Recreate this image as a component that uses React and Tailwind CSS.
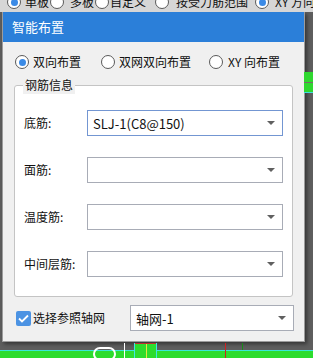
import React from 'react';

const font = { fontFamily: '"Noto Sans CJK SC", "Noto Sans", sans-serif' };

const Radio = ({ checked }) => (
  <span className="w-[14px] h-[14px] rounded-full border border-[#5a5a5a] bg-white flex items-center justify-center shrink-0">
    {checked && <span className="w-[7px] h-[7px] rounded-full bg-[#3a8ae6]" />}
  </span>
);

const Caret = () => (
  <svg width="8" height="4" viewBox="0 0 8 4" className="shrink-0">
    <path d="M0 0h8L4 4z" fill="#606060" />
  </svg>
);

const Select = ({ value, focused, className = '' }) => (
  <div
    className={`h-[26px] bg-white border flex items-center pl-[5px] pr-[7px] ${
      focused ? 'border-[#7396d2]' : 'border-[#a8acb6]'
    } ${className}`}
  >
    <span className="flex-1 text-[13px] text-[#111] leading-none">{value}</span>
    <Caret />
  </div>
);

const Row = ({ label, value, focused }) => (
  <div className="flex items-center h-[26px]">
    <span className="w-[63px] text-[12px] text-[#111]">{label}</span>
    <Select value={value} focused={focused} className="w-[196px]" />
  </div>
);

export default function App() {
  return (
    <div className="w-[313px] h-[358px] bg-[#5e5e5e] relative overflow-hidden" style={font}>
      {/* toolbar strip behind the dialog */}
      <div className="h-[12px] bg-[#d6d6d6] overflow-hidden relative">
        <div className="flex items-center -mt-[8px] h-[20px] text-[12px] text-[#111] whitespace-nowrap">
          <span className="w-[3px] h-full bg-white" />
          <span className="ml-[7px]"><Radio checked /></span>
          <span className="ml-[4px]">单板</span>
          <span className="ml-[1px]"><Radio /></span>
          <span className="ml-[6px]">多板</span>
          <span className="ml-[1px]"><Radio /></span>
          <span className="ml-[1px]">自定义</span>
          <span className="ml-[9px]"><Radio /></span>
          <span className="ml-[7px]">按受力筋范围</span>
          <span className="ml-[2px] w-px h-full bg-[#9a9a9a]" />
          <span className="ml-[5px]"><Radio checked /></span>
          <span className="ml-[6px]">XY 方向</span>
        </div>
      </div>

      {/* canvas scraps on the right */}
      <div className="absolute left-[304px] top-[72px] w-[9px] h-[21px] bg-[#2fd82f] border-b border-[#3ee0e0]">
        <div className="mt-[10px] h-px bg-[#7a6a6a]" />
      </div>

      <div className="flex">
        {/* dialog */}
        <div className="ml-[2px] w-[303px] h-[330px] bg-[#f0f0f0] border border-[#9c9c9c] border-t-0 shadow-[2px_2px_4px_rgba(0,0,0,0.45)] flex flex-col">
          <div className="h-[30px] bg-[#2b7fd9] flex items-center pl-[9px] text-white text-[13px]">
            智能布置
          </div>

          <div className="flex items-center h-[20px] mt-[10px] pl-[12px] text-[12px] text-[#111]">
            <Radio checked />
            <span className="ml-[4px]">双向布置</span>
            <span className="ml-[20px]"><Radio /></span>
            <span className="ml-[4px]">双网双向布置</span>
            <span className="ml-[18px]"><Radio /></span>
            <span className="ml-[5px]">XY 向布置</span>
          </div>

          <div className="relative mt-[13px] ml-[11px] w-[279px] h-[212px] bg-white border border-[#c4c4c4] rounded-[3px] pt-[24px] pl-[9px] flex flex-col gap-[21px]">
            <span className="absolute left-[8px] -top-[10px] px-[2px] bg-[#f0f0f0] text-[12px] leading-[18px] text-[#111]">
              钢筋信息
            </span>
            <Row label="底筋:" value="SLJ-1(C8@150)" focused />
            <Row label="面筋:" value="" />
            <Row label="温度筋:" value="" />
            <Row label="中间层筋:" value="" />
          </div>

          <div className="flex items-center mt-[8px] pl-[13px]">
            <span className="w-[15px] h-[15px] rounded-[2px] bg-[#4c93e3] flex items-center justify-center">
              <svg width="11" height="9" viewBox="0 0 11 9">
                <path d="M1 4.5l3 3L10 1.5" stroke="white" strokeWidth="1.8" fill="none" />
              </svg>
            </span>
            <span className="ml-[2px] text-[12px] text-[#111]">选择参照轴网</span>
            <Select value="轴网-1" className="ml-[25px] w-[164px]" />
          </div>
        </div>
      </div>

      {/* canvas below */}
      <div className="absolute left-0 right-0 top-[350px] h-[8px] bg-[#2ddc2d] border-t border-[#3ae6d8]" />
      <div className="absolute left-[93px] top-[347px] w-[23px] h-[14px] rounded-full border-2 border-white" />
      <div className="absolute left-[124px] top-[343px] w-px h-[15px] bg-white" />
      <div className="absolute left-[134px] top-[343px] w-[23px] h-[15px] border-x border-[#3ee6e6] bg-[#2ddc2d]">
        <div className="h-px bg-[#c03030]" />
        <div className="ml-[11px] w-px h-[14px] bg-[#e6e640]" />
      </div>
      <div className="absolute left-[225px] top-[343px] w-px h-[15px] bg-[#d02020]" />
      <div className="absolute left-[242px] top-[343px] w-px h-[7px] bg-[#1a8a1a]" />
    </div>
  );
}
